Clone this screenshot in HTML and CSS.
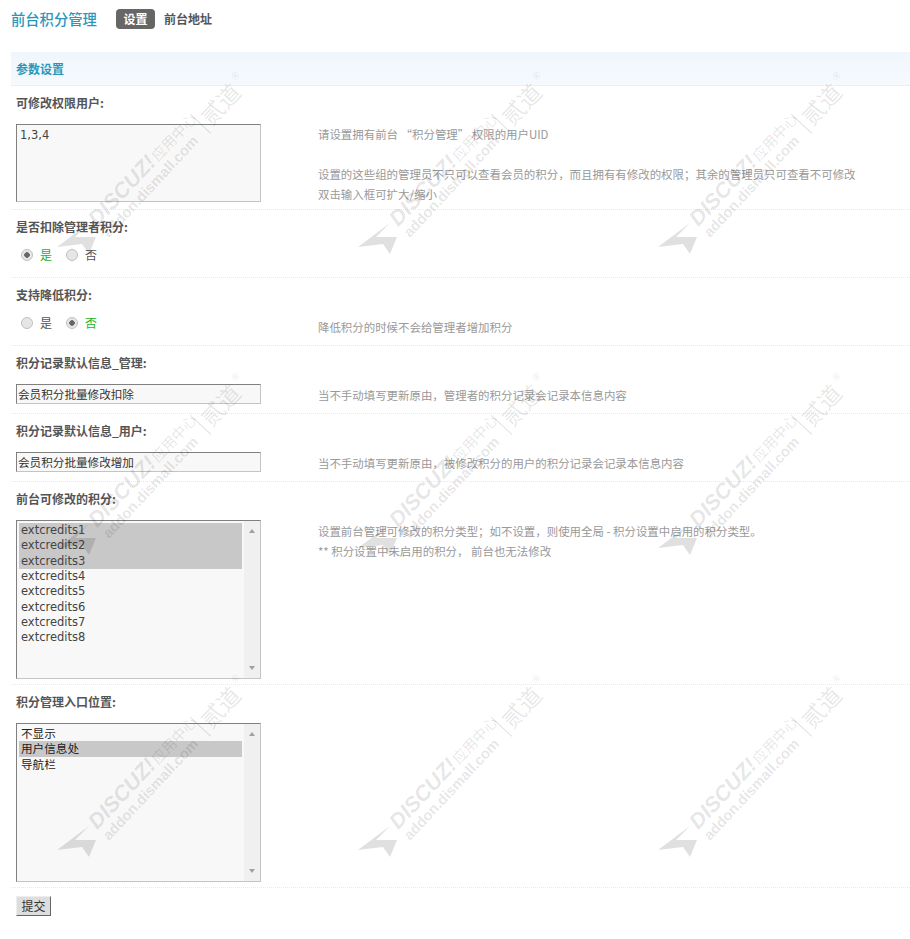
FILE: index.html
```html
<!DOCTYPE html>
<html lang="zh-CN">
<head>
<meta charset="utf-8">
<title>前台积分管理</title>
<link rel="stylesheet" href="styles.css">
</head>
<body>
<div class="page">
  <header class="top">
    <h1 class="title">前台积分管理</h1>
    <nav class="tabs">
      <a class="tab active">设置</a>
      <a class="tab">前台地址</a>
    </nav>
  </header>
  <form class="panel">
    <h2 class="section">参数设置</h2>

    <div class="row">
      <div class="label">可修改权限用户:</div>
      <div class="line">
        <div class="ctl"><textarea class="area">1,3,4</textarea></div>
        <div class="note">请设置拥有前台 “积分管理” 权限的用户UID<br><br>设置的这些组的管理员不只可以查看会员的积分，而且拥有有修改的权限；其余的管理员只可查看不可修改<br>双击输入框可扩大/缩小</div>
      </div>
    </div>

    <div class="row">
      <div class="label">是否扣除管理者积分:</div>
      <div class="line">
        <div class="ctl radios">
          <label class="radio on"><input type="radio" name="a" checked>是</label>
          <label class="radio"><input type="radio" name="a">否</label>
        </div>
        <div class="note"></div>
      </div>
    </div>

    <div class="row">
      <div class="label">支持降低积分:</div>
      <div class="line">
        <div class="ctl radios">
          <label class="radio"><input type="radio" name="b">是</label>
          <label class="radio on"><input type="radio" name="b" checked>否</label>
        </div>
        <div class="note note-low">降低积分的时候不会给管理者增加积分</div>
      </div>
    </div>

    <div class="row">
      <div class="label">积分记录默认信息_管理:</div>
      <div class="line">
        <div class="ctl"><input class="text" type="text" value="会员积分批量修改扣除"></div>
        <div class="note note-text">当不手动填写更新原由，管理者的积分记录会记录本信息内容</div>
      </div>
    </div>

    <div class="row">
      <div class="label">积分记录默认信息_用户:</div>
      <div class="line">
        <div class="ctl"><input class="text" type="text" value="会员积分批量修改增加"></div>
        <div class="note note-text">当不手动填写更新原由，被修改积分的用户的积分记录会记录本信息内容</div>
      </div>
    </div>

    <div class="row">
      <div class="label">前台可修改的积分:</div>
      <div class="line">
        <div class="ctl">
          <div class="list list-en" role="listbox" aria-multiselectable="true">
            <div class="options">
              <div class="opt sel" role="option">extcredits1</div>
              <div class="opt sel" role="option">extcredits2</div>
              <div class="opt sel" role="option">extcredits3</div>
              <div class="opt" role="option">extcredits4</div>
              <div class="opt" role="option">extcredits5</div>
              <div class="opt" role="option">extcredits6</div>
              <div class="opt" role="option">extcredits7</div>
              <div class="opt" role="option">extcredits8</div>
            </div>
            <div class="scroll"><span class="arrow up"></span><span class="arrow down"></span></div>
          </div>
        </div>
        <div class="note note-list">设置前台管理可修改的积分类型；如不设置，则使用全局 - 积分设置中启用的积分类型。<br>** 积分设置中未启用的积分， 前台也无法修改</div>
      </div>
    </div>

    <div class="row">
      <div class="label">积分管理入口位置:</div>
      <div class="line">
        <div class="ctl">
          <div class="list list-zh" role="listbox" aria-multiselectable="true">
            <div class="options">
              <div class="opt" role="option">不显示</div>
              <div class="opt sel" role="option">用户信息处</div>
              <div class="opt" role="option">导航栏</div>
            </div>
            <div class="scroll"><span class="arrow up"></span><span class="arrow down"></span></div>
          </div>
        </div>
        <div class="note"></div>
      </div>
    </div>

    <div class="actions"><button class="submit" type="button">提交</button></div>
  </form>
</div>

<svg class="marks" width="910" height="939" viewBox="0 0 910 939" aria-hidden="true">
  <defs>
    <g id="wm">
      <path class="wm-fill" d="M0 0 L32 -24 L18 -10 L39 -10 L32 7 L25 -3 Z"/>
      <g transform="rotate(-47)">
        <text class="wm-big" x="42" y="16">DISCUZ!</text>
        <text class="wm-zh" x="131" y="16">应用中心</text>
        <text class="wm-url" x="42" y="32">addon.dismall.com</text>
        <line class="wm-sep" x1="188" y1="7" x2="188" y2="35"/>
        <text class="wm-dao" x="193" y="31">贰道</text>
        <text class="wm-reg" x="243" y="17">®</text>
      </g>
    </g>
  </defs>
  <use href="#wm" x="57" y="247"/>
  <use href="#wm" x="358" y="247"/>
  <use href="#wm" x="658" y="247"/>
  <use href="#wm" x="57" y="548"/>
  <use href="#wm" x="358" y="548"/>
  <use href="#wm" x="658" y="548"/>
  <use href="#wm" x="57" y="850"/>
  <use href="#wm" x="358" y="850"/>
  <use href="#wm" x="658" y="850"/>
</svg>
</body>
</html>
```

FILE: styles.css
```css
* { box-sizing: border-box; }
html, body { margin: 0; background: #fff; }
body {
  position: relative;
  width: 910px;
  height: 939px;
  overflow: hidden;
  font: 12px/20px "Noto Sans CJK SC", "Liberation Sans", sans-serif;
  color: #555;
}
.page { padding: 0 0 0 11px; }

.top { display: flex; align-items: center; height: 52px; padding-bottom: 15px; }
.title { width: 86px; margin: 0 19px 0 0; font-size: 14.3px; font-weight: 500; color: #2a97ba; line-height: 20px; white-space: nowrap; }
.tabs { display: flex; gap: 9px; }
.tab { height: 20px; line-height: 19px; font-weight: 700; color: #555; }
.tab.active { width: 39px; text-align: center; color: #fff; background: #666; border-radius: 4px; }

.section {
  margin: 0;
  height: 34px;
  padding: 0 5px;
  font-size: 12px;
  font-weight: 700;
  line-height: 33px;
  color: #2a97ba;
  background: linear-gradient(#eff6fc, #f6fafe);
  border-bottom: 1px dotted #dfeaf0;
}

.row { padding: 0 5px; border-bottom: 1px dotted #e2ebef; }
.label { height: 38px; padding-top: 6px; font-weight: 700; line-height: 22px; color: #555; }
.line { display: flex; }
.ctl { flex: none; width: 245px; margin-right: 57px; }
.note { flex: none; width: 545px; font-size: 11.45px; color: #999; }

.area {
  display: block;
  width: 245px;
  height: 78px;
  margin: 0 0 7px;
  padding: 3px;
  font: 11.5px/15px "DejaVu Sans", sans-serif;
  color: #444;
  background: #f8f8f8;
  border: 1px solid;
  border-color: #808080 #c4c4c4 #c4c4c4 #808080;
  resize: none;
  outline: none;
}

.radios { display: flex; gap: 14px; height: 29px; padding: 0 0 0 5px; }
.radio { display: flex; align-items: center; height: 14px; color: #555; }
.radio input {
  appearance: none;
  width: 12px;
  height: 12px;
  margin: 0 7px 0 0;
  background: #e6e6e6;
  border: 1px solid #c0c0c0;
  border-radius: 50%;
}
.radio input:checked { background: radial-gradient(circle, #666 0 2.5px, #e6e6e6 3px); }
.radio.on { color: #22b322; }
.note-low { padding-top: 1px; }

.text {
  display: block;
  width: 245px;
  height: 20px;
  margin: 0 0 9px;
  padding: 0 1px;
  font: 11.6px/18px "Noto Sans CJK SC", sans-serif;
  color: #333;
  background: #f8f8f8;
  border: 1px solid;
  border-color: #808080 #c4c4c4 #c4c4c4 #808080;
  outline: none;
}
.note-text { padding-top: 1px; }
.note-list { padding-top: 1px; }

.list {
  display: flex;
  width: 245px;
  height: 159px;
  margin: 0 0 5px;
  background: #f8f8f8;
  border: 1px solid;
  border-color: #808080 #c4c4c4 #c4c4c4 #808080;
}
.options { flex: none; width: 227px; padding: 2px 0 0 2px; }
.opt { width: 223px; height: 15.33px; padding: 0 2px; line-height: 15.33px; white-space: nowrap; }
.opt.sel { background: #c8c8c8; }
.list-en { font: 11.5px/15px "DejaVu Sans", sans-serif; color: #444; }
.list-zh { font: 11.6px/15px "Noto Sans CJK SC", sans-serif; color: #222; }

.scroll {
  display: flex;
  flex: 1;
  flex-direction: column;
  align-items: center;
  justify-content: space-between;
  padding: 8px 0 8px;
  background: #f0f0f0;
}
.arrow { width: 0; height: 0; border-left: 3px solid transparent; border-right: 3px solid transparent; }
.arrow.up { border-bottom: 4px solid #a0a0a0; }
.arrow.down { border-top: 4px solid #a0a0a0; }

.actions { padding: 8px 5px 0; }
.submit {
  display: block;
  width: 35px;
  height: 20px;
  padding: 0;
  font: 12px/18px "Noto Sans CJK SC", sans-serif;
  color: #333;
  background: #ddd;
  border: 1px solid;
  border-color: #eee #666 #666 #eee;
  border-radius: 0;
}

.marks { position: absolute; left: 0; top: 0; pointer-events: none; }
.wm-fill { fill: rgba(0, 0, 0, .12); }
.wm-big { font: italic 700 21.5px "Liberation Sans", sans-serif; fill: rgba(0, 0, 0, .11); }
.wm-zh { font: 14.5px "Noto Sans CJK SC", sans-serif; fill: rgba(0, 0, 0, .11); }
.wm-url { font: 700 14.6px "Liberation Sans", sans-serif; fill: rgba(0, 0, 0, .11); }
.wm-sep { stroke: rgba(0, 0, 0, .12); stroke-width: 1; }
.wm-dao { font: 23px "Noto Sans CJK SC", sans-serif; fill: rgba(0, 0, 0, .1); }
.wm-reg { font: 10px "Liberation Sans", sans-serif; fill: rgba(0, 0, 0, .13); }
```
